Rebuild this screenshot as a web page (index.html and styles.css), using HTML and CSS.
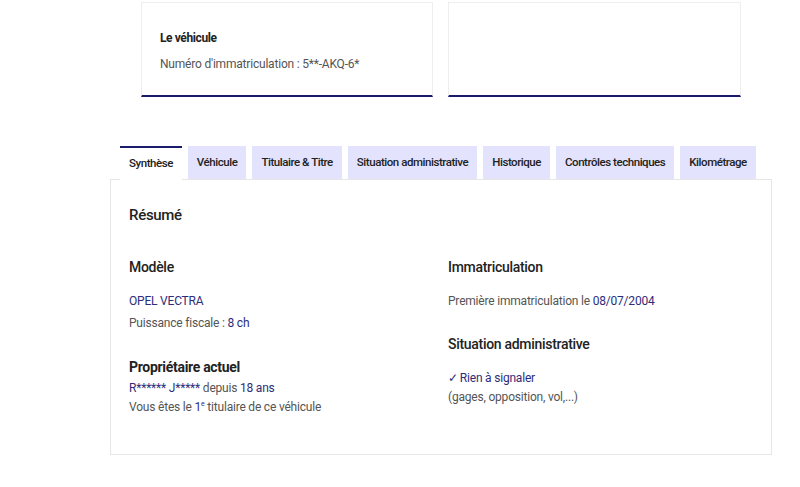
FILE: index.html
```html
<!DOCTYPE html>
<html lang="fr">
<head>
<meta charset="utf-8">
<link rel="stylesheet" href="styles.css">
</head>
<body>
<div class="cards">
  <div class="card">
    <div class="card-title">Le véhicule</div>
    <div class="card-text">Numéro d'immatriculation : 5**-AKQ-6*</div>
  </div>
  <div class="card"></div>
</div>

<div class="tabs-wrap">
  <div class="tabs">
    <div class="tab active">Synthèse</div>
    <div class="tab">Véhicule</div>
    <div class="tab">Titulaire &amp; Titre</div>
    <div class="tab">Situation administrative</div>
    <div class="tab">Historique</div>
    <div class="tab">Contrôles techniques</div>
    <div class="tab">Kilométrage</div>
  </div>
  <div class="panel">
    <h2 class="resume">Résumé</h2>
    <div class="cols">
      <div class="col">
        <h3 class="h">Modèle</h3>
        <p class="line blue l1">OPEL VECTRA</p>
        <p class="line l2">Puissance fiscale : <span class="blue">8 ch</span></p>
        <h3 class="h strong h2b">Propriétaire actuel</h3>
        <p class="line lr"><span class="blue">R****** J*****</span> depuis <span class="blue">18 ans</span></p>
        <p class="line lv">Vous êtes le <span class="blue">1<sup>e</sup></span> titulaire de ce véhicule</p>
      </div>
      <div class="col">
        <h3 class="h">Immatriculation</h3>
        <p class="line l1">Première immatriculation le <span class="blue">08/07/2004</span></p>
        <h3 class="h h2r">Situation administrative</h3>
        <p class="line blue l3"><span class="check">✓</span>Rien à signaler</p>
        <p class="line l4">(gages, opposition, vol,...)</p>
      </div>
    </div>
  </div>
</div>
</body>
</html>
```

FILE: styles.css
```css
* { box-sizing: border-box; }
html, body { margin: 0; padding: 0; background: #fff; }
body {
  font-family: Roboto, "Liberation Sans", sans-serif;
  color: #555;
  width: 800px;
  height: 487px;
  overflow: hidden;
}
.cards {
  display: flex;
  gap: 15px;
  margin-left: 141px;
  padding-top: 2px;
}
.card {
  width: 292px;
  height: 95px;
  border: 1px solid #eeeeee;
  border-bottom: 2px solid #1b1b6b;
  padding: 27px 0 0 18px;
}
.card + .card { width: 293px; }
.card-title {
  font-weight: bold;
  font-size: 12px;
  letter-spacing: -0.4px;
  color: #222;
  line-height: 16px;
}
.card-text {
  font-size: 12px;
  letter-spacing: -0.2px;
  line-height: 16px;
  margin-top: 10px;
  color: #555;
}
.tabs-wrap {
  margin-left: 110px;
  width: 662px;
  margin-top: 49px;
}
.tabs {
  display: flex;
  gap: 6px;
  padding-left: 10px;
  align-items: flex-end;
}
.tab {
  flex: none;
  white-space: nowrap;
  height: 33px;
  line-height: 33px;
  padding: 0 9px;
  background: #e3e3fd;
  color: #222;
  font-size: 11.5px;
  font-weight: 500;
  letter-spacing: -0.45px;
}
.tab.active {
  background: #fff;
  border-top: 2px solid #1b1b6b;
  line-height: 31px;
  height: 34px;
  margin-bottom: -1px;
  position: relative;
  z-index: 1;
}
.panel {
  border: 1px solid #e6e6e6;
  height: 276px;
  padding: 25px 18px 0 18px;
}
.resume {
  margin: 0;
  font-size: 15px;
  font-weight: 500;
  letter-spacing: -0.3px;
  color: #222;
  line-height: 20px;
}
.cols {
  display: grid;
  grid-template-columns: 319px 1fr;
  margin-top: 32px;
}
.h {
  margin: 0;
  font-size: 14px;
  font-weight: 500;
  letter-spacing: -0.3px;
  color: #222;
  line-height: 20px;
}
.h.strong { font-weight: bold; }
.line {
  margin: 0;
  font-size: 12px;
  letter-spacing: -0.2px;
  line-height: 20px;
  color: #555;
  white-space: nowrap;
}
.l1 { margin-top: 14px; }
.l2 { margin-top: 2px; }
.h2b { margin-top: 24px; }
.lr { margin-top: 1px; }
.lv { margin-top: -1px; }
.h2r { margin-top: 23px; }
.l3 { margin-top: 14px; }
.l4 { margin-top: -1px; }
.blue { color: #2d2d7a; }
sup { font-size: 7px; line-height: 0; }
.check { margin-right: 2px; }
```
